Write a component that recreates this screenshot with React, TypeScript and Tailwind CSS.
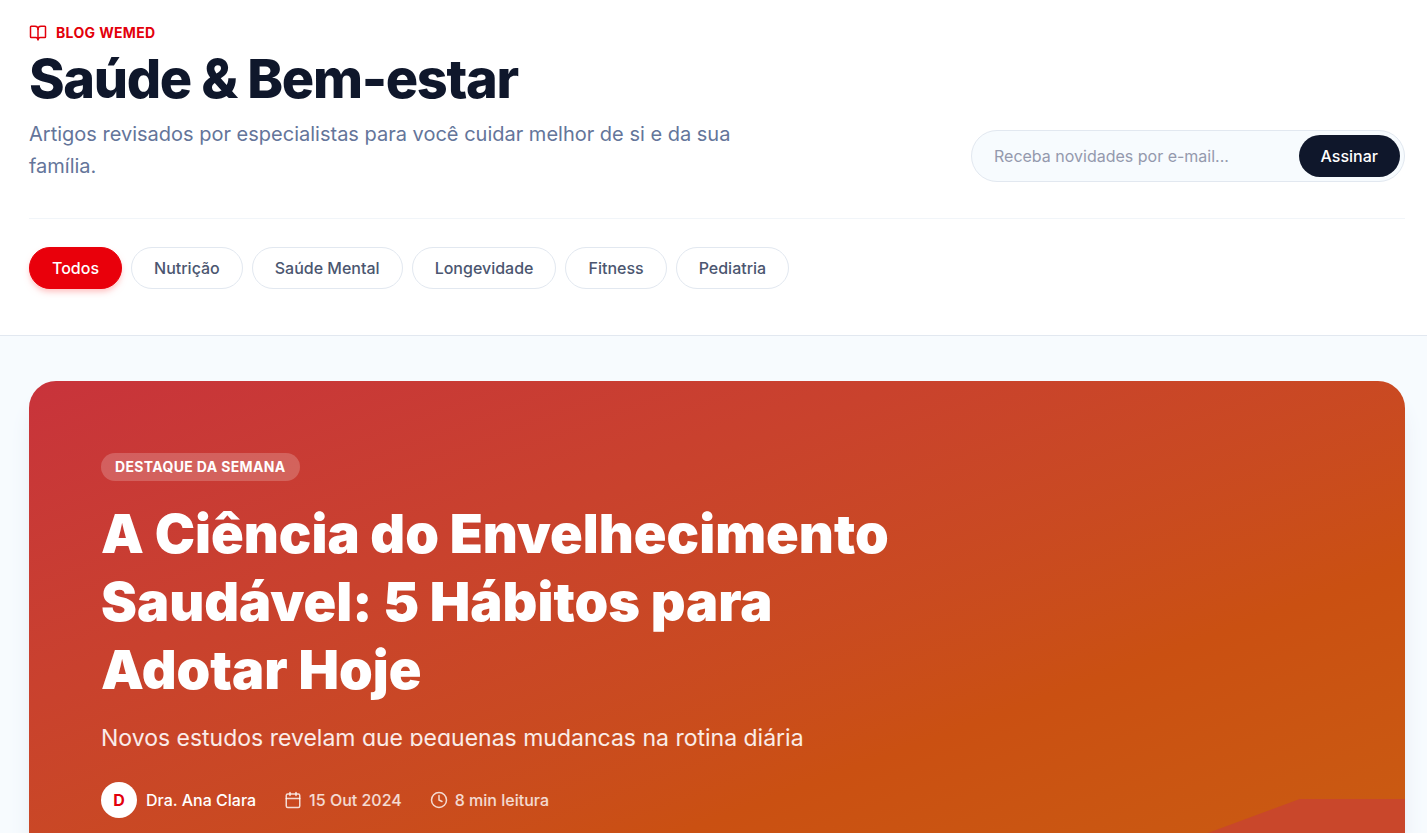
import React, { useState } from 'react';
import { BookOpen, Calendar, Clock } from 'lucide-react';

const categories = ['Todos', 'Nutrição', 'Saúde Mental', 'Longevidade', 'Fitness', 'Pediatria'];

const App = () => {
  const [active, setActive] = useState('Todos');

  return (
    <div className="min-h-screen bg-[#f7fbfe] font-['Inter',sans-serif] text-slate-900">
      {/* Header */}
      <header className="bg-white border-b border-slate-200 pl-[29px] pr-[22px] pt-6 pb-[46px]">
        <div className="flex items-end justify-between gap-9 pb-9 border-b border-slate-100">
          <div className="max-w-[756px]">
            <div className="flex items-center gap-[9px] mb-[9px] text-[#e3000b]">
              <BookOpen size={18} />
              <span className="text-sm leading-[18px] font-bold uppercase tracking-wide">Blog WeMed</span>
            </div>
            <h1 className="text-[54px] leading-[55px] font-extrabold tracking-tight mb-3">Saúde & Bem-estar</h1>
            <p className="text-xl leading-8 text-[#64759a]">
              Artigos revisados por especialistas para você cuidar melhor de si e da sua família.
            </p>
          </div>

          <form
            className="flex items-center w-[434px] shrink-0 bg-[#f7fbfe] border border-slate-200 rounded-full p-1 pl-[22px]"
            onSubmit={(e) => e.preventDefault()}
          >
            <input
              type="email"
              aria-label="E-mail"
              placeholder="Receba novidades por e-mail..."
              className="flex-1 min-w-0 bg-transparent text-base outline-none placeholder:text-[#9499ad]"
            />
            <button type="submit" className="bg-slate-900 text-white text-base font-medium rounded-full px-[22px] py-[9px]">
              Assinar
            </button>
          </form>
        </div>

        <nav className="flex flex-wrap gap-[9px] pt-7">
          {categories.map((category) => (
            <button
              key={category}
              type="button"
              onClick={() => setActive(category)}
              className={`rounded-full border px-[22px] py-2 text-base font-medium ${
                active === category
                  ? 'bg-[#e9000b] border-[#e9000b] text-white shadow-md shadow-red-200'
                  : 'bg-white border-slate-200 text-[#4b5670]'
              }`}
            >
              {category}
            </button>
          ))}
        </nav>
      </header>

      {/* Featured article */}
      <main className="pl-[29px] pr-[22px] pt-[45px] pb-12">
        <article className="relative overflow-hidden rounded-[27px] bg-linear-to-br from-[#c8333b] via-[#ca5012] via-68% to-[#ca5d12] p-[72px] text-white shadow-xl shadow-slate-200">
          <div className="absolute bottom-0 right-0 h-[91px] w-[351px] bg-[#c9472b] [clip-path:polygon(70%_0,100%_0,100%_100%,0_100%)]"></div>

          <div className="relative max-w-[806px]">
            <span className="flex w-fit items-center h-7 rounded-full bg-white/20 px-3.5 text-sm font-bold uppercase tracking-wide">
              Destaque da semana
            </span>
            <h2 className="mt-[19px] mb-[18px] text-[54px] leading-[68px] font-black">
              A Ciência do Envelhecimento Saudável: 5 Hábitos para Adotar Hoje
            </h2>
            <p className="h-6 max-w-[756px] overflow-hidden text-[23px] leading-8 text-white/90">
              Novos estudos revelam que pequenas mudanças na rotina diária
            </p>

            <div className="mt-9 flex items-center gap-7 text-base font-medium text-white/80">
              <div className="flex items-center gap-[9px] text-white">
                <span className="flex h-9 w-9 items-center justify-center rounded-full bg-white font-bold text-[#e3000b]">D</span>
                <span>Dra. Ana Clara</span>
              </div>
              <div className="flex items-center gap-[7px]">
                <Calendar size={18} />
                <span>15 Out 2024</span>
              </div>
              <div className="flex items-center gap-[7px]">
                <Clock size={18} />
                <span>8 min leitura</span>
              </div>
            </div>
          </div>
        </article>
      </main>
    </div>
  );
};

export default App;
